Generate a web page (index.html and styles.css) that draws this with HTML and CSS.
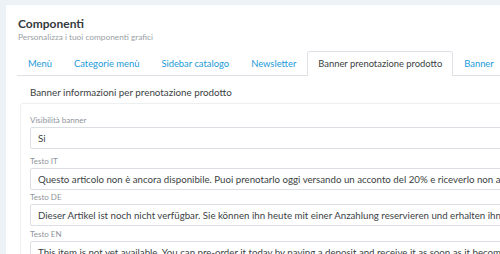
FILE: index.html
```html
<!DOCTYPE html>
<html lang="it">
<head>
<meta charset="utf-8">
<link rel="stylesheet" href="styles.css">
</head>
<body>
<div class="card">
  <h1 class="title">Componenti</h1>
  <p class="subtitle">Personalizza i tuoi componenti grafici</p>
  <nav class="tabs">
    <a class="tab">Menù</a>
    <a class="tab">Categorie menù</a>
    <a class="tab">Sidebar catalogo</a>
    <a class="tab">Newsletter</a>
    <a class="tab active">Banner prenotazione prodotto</a>
    <a class="tab">Banner</a>
  </nav>
  <div class="content">
    <h2 class="legend">Banner informazioni per prenotazione prodotto</h2>
    <div class="box">
      <div class="group group-first">
        <label class="label">Visibilità banner</label>
        <div class="input">Si</div>
      </div>
      <div class="group group-it">
        <label class="label">Testo IT</label>
        <div class="input">Questo articolo non è ancora disponibile. Puoi prenotarlo oggi versando un acconto del 20% e riceverlo non appena disponibile.</div>
      </div>
      <div class="group">
        <label class="label">Testo DE</label>
        <div class="input">Dieser Artikel ist noch nicht verfügbar. Sie können ihn heute mit einer Anzahlung reservieren und erhalten ihn sobald verfügbar.</div>
      </div>
      <div class="group">
        <label class="label">Testo EN</label>
        <div class="input">This item is not yet available. You can pre-order it today by paying a deposit and receive it as soon as it becomes available.</div>
      </div>
    </div>
  </div>
</div>
</body>
</html>
```
FILE: styles.css
```css
html, body {
  margin: 0;
  padding: 0;
}
body {
  background: #edf2f6;
  font-family: Lato, "Open Sans", sans-serif;
  color: #333;
  width: 500px;
  height: 254px;
  overflow: hidden;
  padding: 5px 0 0 6px;
  box-sizing: border-box;
}
.card {
  background: #fff;
  width: 600px;
  height: 400px;
  padding: 12px 0 0 11px;
  box-sizing: border-box;
}
.title {
  margin: 0 0 0 1px;
  font-size: 12px;
  font-weight: 700;
  line-height: 14px;
  color: #343a40;
}
.subtitle {
  margin: 1px 0 0 1px;
  font-size: 8.3px;
  line-height: 11px;
  color: #9a9fa4;
}
.tabs {
  display: flex;
  margin-top: 8px;
  border-bottom: 1px solid #dee2e6;
  white-space: nowrap;
}
.tab {
  display: block;
  padding: 0 10px;
  height: 24px;
  line-height: 23px;
  font-size: 9.4px;
  color: #1d9ad8;
  border: 1px solid transparent;
  border-bottom: 0;
  margin-bottom: -1px;
  border-radius: 3px 3px 0 0;
  box-sizing: border-box;
}
.tab.active {
  color: #3b3f44;
  background: #fff;
  border-color: #dee2e6;
  height: 25px;
}
.content {
  padding: 9px 0 0 3px;
}
.legend {
  margin: 0 0 0 10px;
  font-size: 9.8px;
  font-weight: 400;
  line-height: 14px;
  color: #3b3f44;
}
.box {
  margin-top: 4px;
  border: 1px solid #eceef0;
  border-radius: 3px;
  padding: 9px 0 0 9px;
}
.group {
  margin-bottom: 1px;
}
.group-first {
  margin-bottom: 5px;
}
.group-it {
  margin-bottom: 0;
}
.label {
  display: block;
  font-size: 8px;
  line-height: 14px;
  color: #8f959b;
}
.input {
  height: 22px;
  line-height: 20px;
  box-sizing: border-box;
  border: 1px solid #dcdfe3;
  border-radius: 2px;
  padding: 0 7px;
  font-size: 9.7px;
  color: #3b3f44;
  white-space: nowrap;
  overflow: hidden;
}
```
